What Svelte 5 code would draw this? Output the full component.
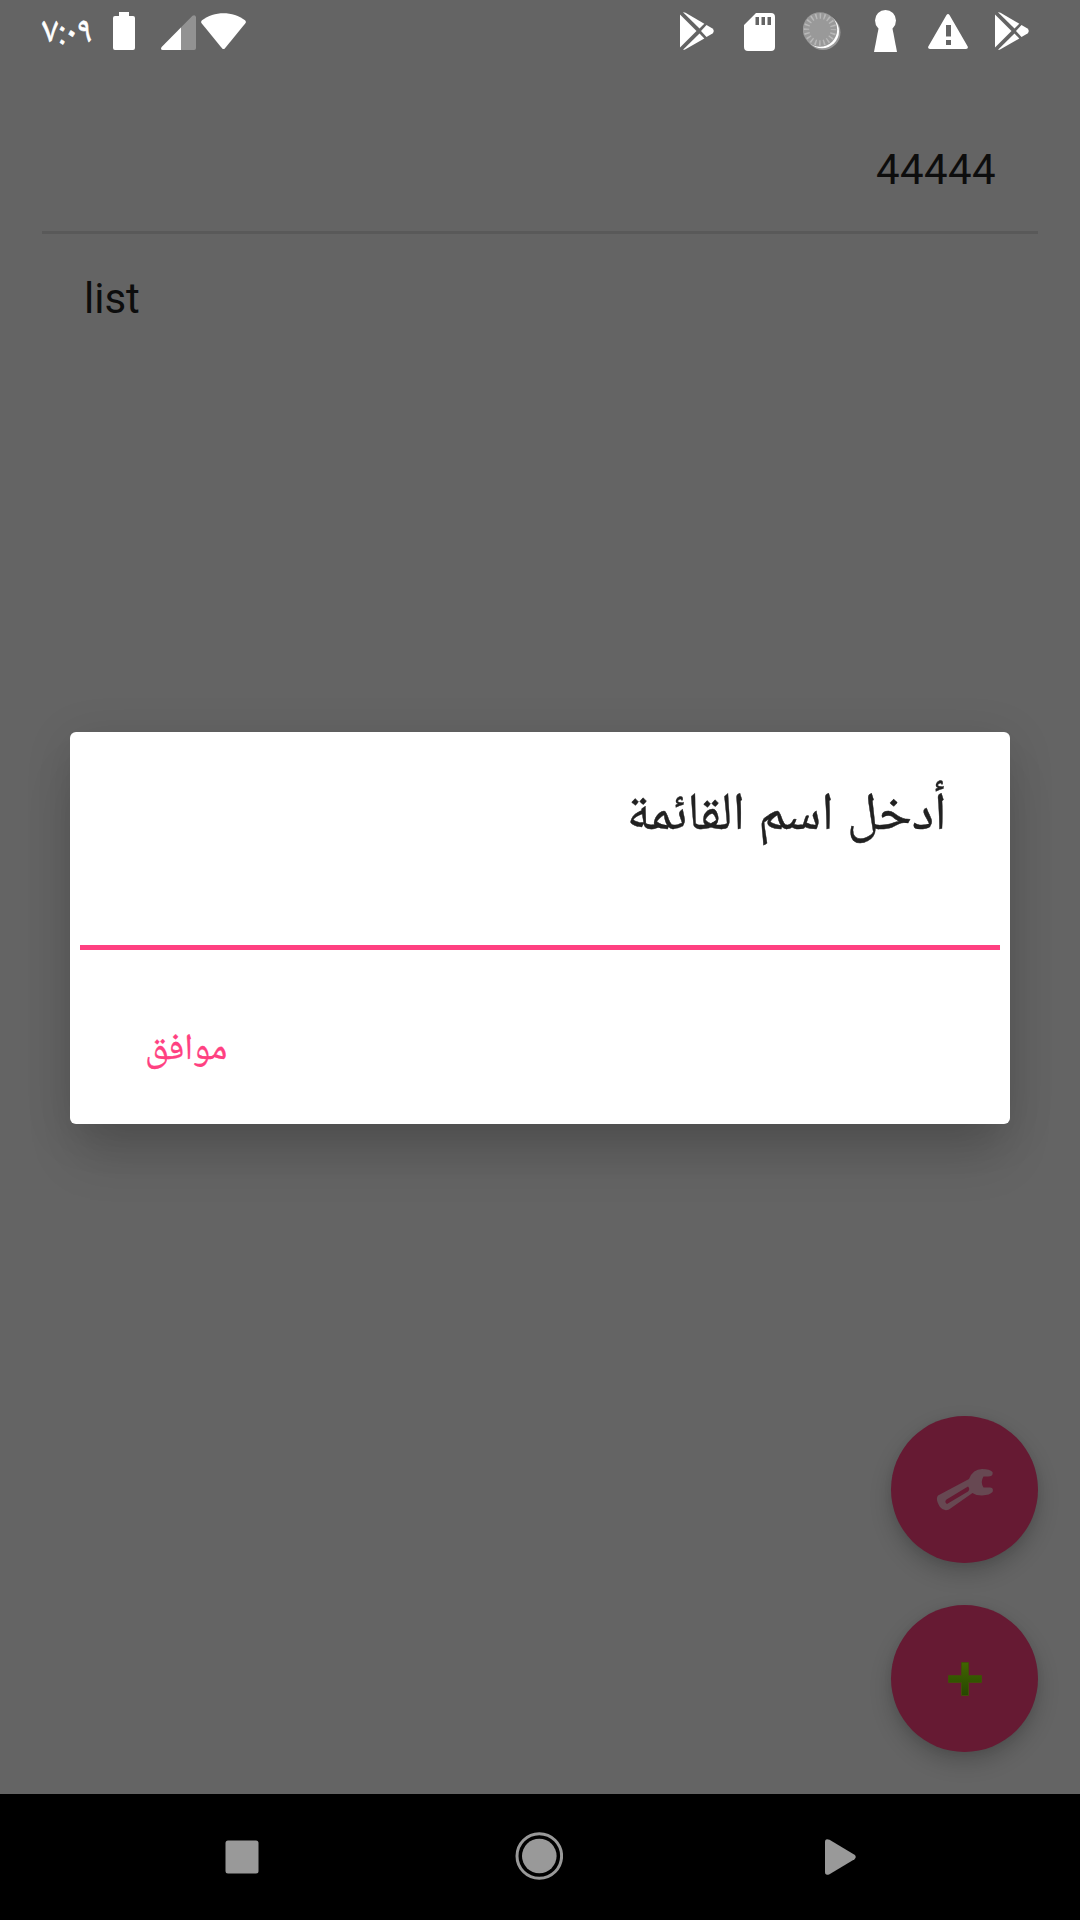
<script>
  const notes = ['44444', 'list'];
</script>

{#snippet play()}
  <svg class="play" width="34" height="38" viewBox="0 0 34 38">
    <path d="M0 2.5L16.5 19L0 35.5Z" />
    <path d="M3 .3Q4 .1 5.500 .8L24.300 11.700L19.500 16.500Z" />
    <path d="M3 37.700Q4 38 5.500 37.200L24.300 26.500L19.500 21.500Z" />
    <path d="M26.500 13L32.500 16.600Q35 19 32.500 21.400L26.500 25L21 19Z" />
  </svg>
{/snippet}

<div class="screen">
  <header class="status">
    <div class="group">
      <span class="time">٧:٠٩</span>
      <svg class="battery" width="22" height="38" viewBox="0 0 22 38">
        <path d="M6 0h10v4h4q2 0 2 2v30q0 2-2 2H2q-2 0-2-2V6q0-2 2-2h4Z" />
      </svg>
      <svg class="signal" width="35" height="35" viewBox="0 0 35 35">
        <path opacity=".3" d="M35 2Q34 -1 31.500 .8L.7 32Q-1 35 2 35H33Q35 35 35 33Z" />
        <path d="M20 12.500L.7 32Q-1 35 2 35H20Z" />
      </svg>
      <svg class="wifi" width="45" height="37" viewBox="0 0 45 37">
        <path d="M1 7.200C13-2.200 32-2.200 44 7.200Q45.500 8.600 44.400 10.200L24 35.200Q22.500 37 21 35.200L.6 10.200Q-.5 8.600 1 7.200Z" />
      </svg>
    </div>
    <div class="group alerts">
      {@render play()}
      <svg class="card" width="31" height="38" viewBox="0 0 31 38">
        <path fill-rule="evenodd" d="M12 0H27Q31 0 31 4V34Q31 38 27 38H4Q0 38 0 34V12ZM11.500 4V12H15V4ZM17.500 4V12H21V4ZM23.500 4V12H27V4Z" />
      </svg>
      <svg class="sync" width="38" height="38" viewBox="0 0 38 38">
        <circle cx="20" cy="20.500" r="17.500" fill="#999" />
        <circle cx="19" cy="19.300" r="17" fill="#fff" />
        <circle cx="17" cy="17.500" r="17.200" fill="#999" />
        <circle cx="17" cy="17.500" r="13.500" fill="none" stroke="#b8b8b8" stroke-width="5.500" stroke-dasharray="1.500 2.741" stroke-dashoffset=".75" />
      </svg>
      <svg class="key" width="23" height="42" viewBox="0 0 23 42">
        <circle cx="11.500" cy="10.500" r="10.500" />
        <path d="M5 16H18L23 42H0Z" />
      </svg>
      <svg class="warn" width="40" height="35" viewBox="0 0 40 35">
        <path fill-rule="evenodd" d="M18.500 1Q20 -1 21.500 1L39.700 32.500Q40.500 35 38 35H2Q-.5 35 .3 32.500ZM18 11V22.500H23V11ZM18 26V31H23V26Z" />
      </svg>
      {@render play()}
    </div>
  </header>

  <main>
    <div class="row numeric">{notes[0]}</div>
    <div class="row">{notes[1]}</div>
    <div class="fabs">
      <button class="fab" aria-label="settings">
        <svg width="58" height="44" viewBox="0 0 58 44">
          <path fill="#674852" fill-rule="evenodd" d="M2 27.500L33 11Q37 1 46 1Q54 1 56.500 4Q57.500 8.500 52 8.500H47.500Q44 14 47.500 19.500H54Q58 20 56.500 24Q54 27 46 27.500Q40 27.500 36.500 25L13 41.500Q8 44 4 39Q-1 31 2 27.500ZM10.500 31.500Q8 34 11 36L32 23.500Q34.500 21 32 18.500Z" />
        </svg>
      </button>
      <button class="fab" aria-label="add">
        <svg width="36" height="36" viewBox="0 0 36 36">
          <defs>
            <linearGradient id="leaf" x1="0" y1="0" x2="0" y2="1">
              <stop offset="0" stop-color="#416500" />
              <stop offset="1" stop-color="#264700" />
            </linearGradient>
          </defs>
          <path fill="url(#leaf)" stroke="#424c0a" d="M14.500 1.500h7v13h13v7h-13v13h-7v-13h-13v-7h13Z" />
        </svg>
      </button>
    </div>
  </main>

  <nav>
    <svg width="34" height="34" viewBox="0 0 34 34"><rect x=".5" y=".5" width="33" height="33" rx="2.500" /></svg>
    <svg class="home" width="48" height="48" viewBox="0 0 48 48">
      <circle cx="24.300" cy="24" r="22.300" fill="none" stroke="#999" stroke-width="3" />
      <circle cx="24.300" cy="24" r="17.300" />
    </svg>
    <svg class="back" width="31" height="36" viewBox="0 0 31 36">
      <path d="M0 3Q0-1 4.500 .8L29.500 15.800Q32 18 29.500 20.200L4.500 35.200Q0 37 0 33Z" />
    </svg>
  </nav>

  <section class="dialog" dir="rtl">
    <h1>أدخل اسم القائمة</h1>
    <div class="field"></div>
    <button class="ok">موافق</button>
  </section>
</div>

<style>
  :global(body) {
    margin: 0;
    overflow: hidden;
  }
  .screen {
    position: relative;
    display: flex;
    flex-direction: column;
    width: 1080px;
    height: 1920px;
    background: #646464;
    font-family: Roboto, 'Noto Naskh Arabic', 'Noto Sans Arabic', 'DejaVu Sans', sans-serif;
    overflow: hidden;
  }
  svg {
    display: block;
    flex: none;
    fill: #fff;
  }
  .status {
    display: flex;
    justify-content: space-between;
    height: 62px;
    padding: 0 51px 0 42px;
  }
  .group {
    display: flex;
    align-items: center;
  }
  .time {
    width: 71px;
    padding-top: 3px;
    color: #fff;
    font-family: 'Noto Naskh Arabic UI', 'Noto Naskh Arabic', Roboto, sans-serif;
    font-size: 37px;
    line-height: 59px;
    white-space: nowrap;
    -webkit-text-stroke: 0.5px #fff;
  }
  .signal { margin: 3px 5px 0 26px; }
  .card { margin: 1px 0 0 30px; }
  .sync { margin: 0 33px 0 28px; }
  .key { margin-right: 31px; }
  .warn { margin-right: 27px; }
  main {
    flex: 1;
    display: flex;
    flex-direction: column;
    padding: 0 42px 42px;
  }
  .row {
    height: 126px;
    padding: 0 42px;
    color: #0d0d0d;
    font-size: 42px;
    line-height: 129px;
  }
  .numeric {
    height: 169px;
    line-height: 216px;
    text-align: right;
    letter-spacing: 0.4px;
    border-bottom: 3px solid #595959;
  }
  .fabs {
    display: flex;
    flex-direction: column;
    align-items: flex-end;
    gap: 42px;
    margin-top: auto;
  }
  button {
    border: 0;
    padding: 0;
    font-family: inherit;
  }
  .fab {
    display: flex;
    align-items: center;
    justify-content: center;
    width: 147px;
    height: 147px;
    border-radius: 50%;
    background: #661a33;
    box-shadow: 0 10px 22px rgba(0, 0, 0, 0.2), 0 2px 8px rgba(0, 0, 0, 0.06);
  }
  nav {
    display: flex;
    align-items: center;
    height: 126px;
    padding-left: 225px;
    background: #000;
  }
  nav svg {
    fill: #999;
    margin-right: 256px;
  }
  nav svg.home { margin: 0 262px 2px 0; }
  nav svg.back { margin: 0; }
  .dialog {
    position: absolute;
    left: 70px;
    top: 732px;
    box-sizing: border-box;
    display: flex;
    flex-direction: column;
    width: 940px;
    height: 392px;
    padding: 0 10px;
    border-radius: 6px;
    background: #fff;
    box-shadow: 0 38px 48px -8px rgba(0, 0, 0, 0.15), 0 8px 48px rgba(0, 0, 0, 0.12);
  }
  h1 {
    height: 213px;
    margin: 0;
    padding-right: 53.5px;
    color: #212121;
    font-size: 53px;
    font-weight: 400;
    line-height: 158px;
    white-space: nowrap;
    -webkit-text-stroke: 0.4px #212121;
  }
  .field {
    height: 5px;
    background: #ff4081;
  }
  .ok {
    align-self: flex-end;
    height: 126px;
    margin: 34px 0 0 65px;
    background: none;
    color: #ff4081;
    font-size: 37px;
    line-height: 126px;
    -webkit-text-stroke: 0.3px #ff4081;
  }
</style>
